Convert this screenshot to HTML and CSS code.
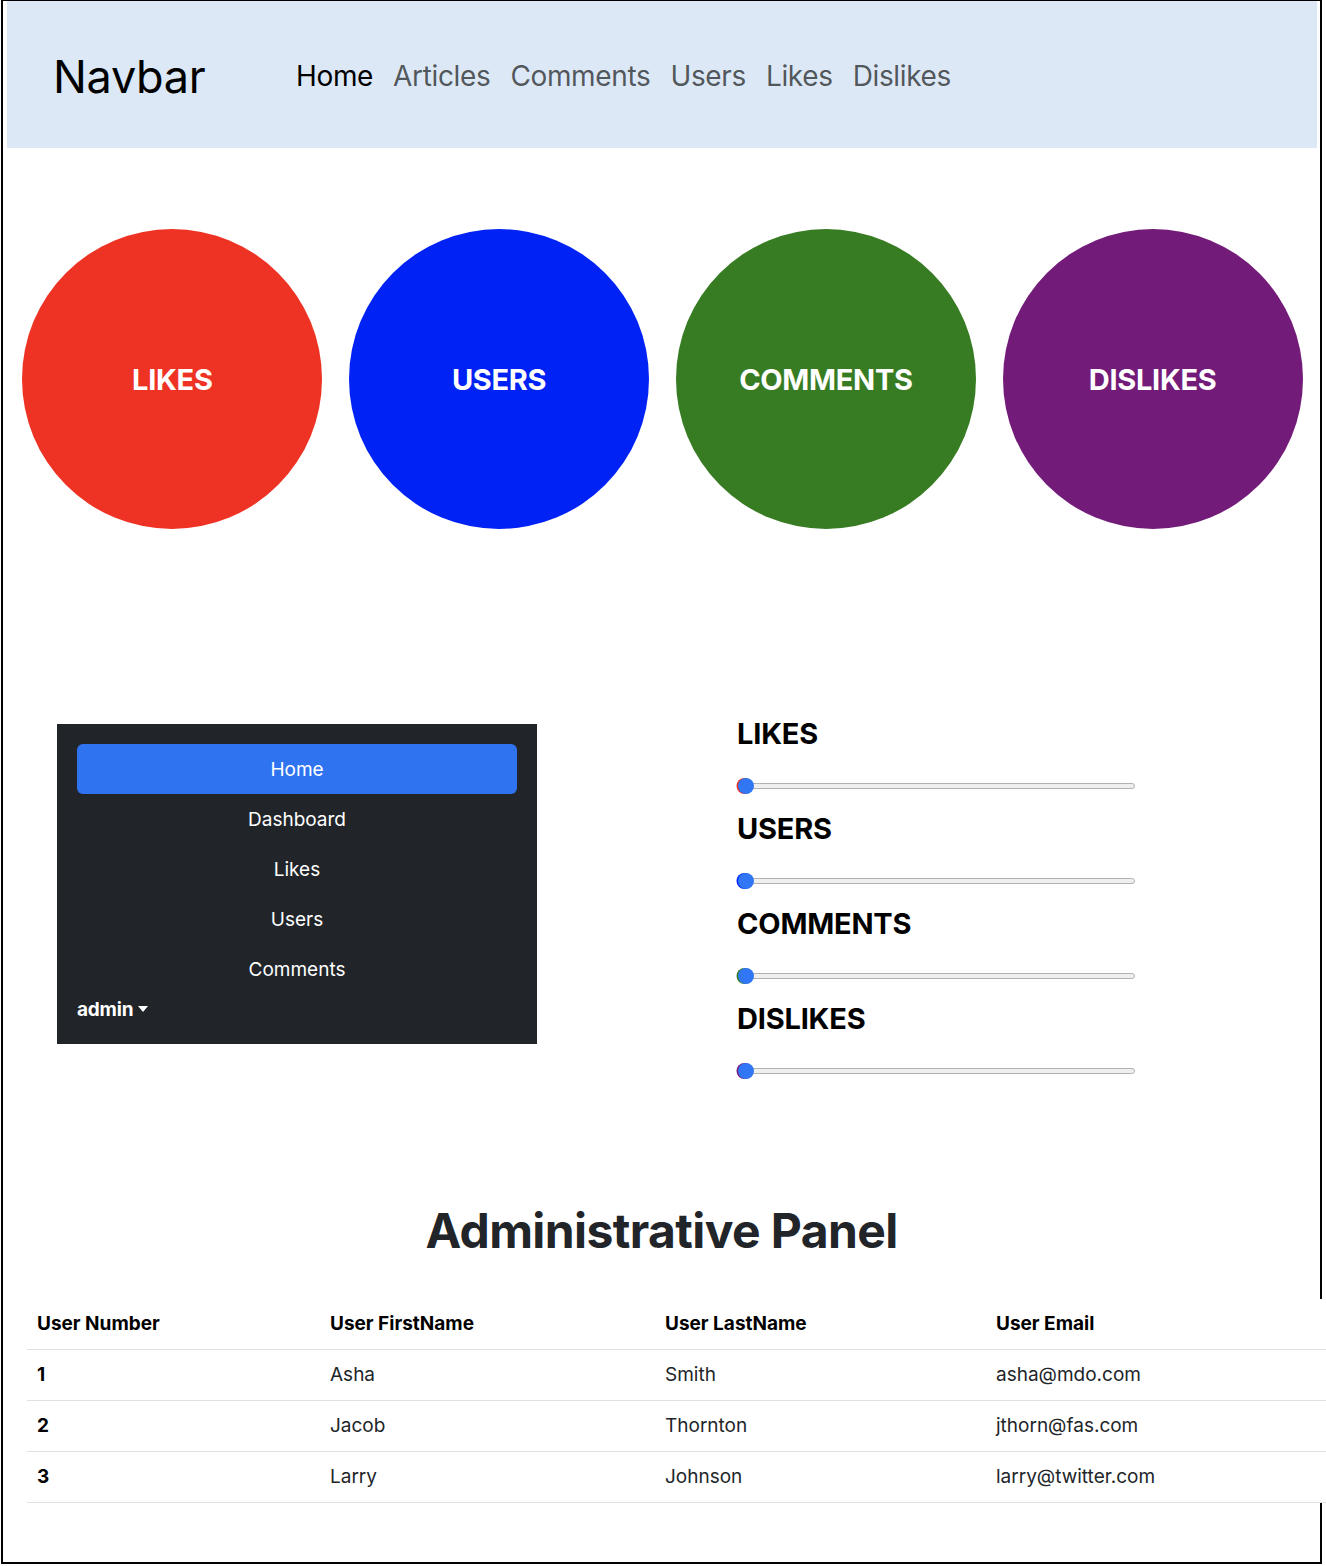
FILE: index.html
```html
<!DOCTYPE html>
<html lang="en">
<head>
<meta charset="utf-8">
<title>Navbar</title>
<link rel="stylesheet" href="styles.css">
</head>
<body>
<div class="frame">
  <nav class="navbar">
    <a class="brand" href="#">Navbar</a>
    <ul class="nav-links">
      <li><a class="active" href="#">Home</a></li>
      <li><a href="#">Articles</a></li>
      <li><a href="#">Comments</a></li>
      <li><a href="#">Users</a></li>
      <li><a href="#">Likes</a></li>
      <li><a href="#">Dislikes</a></li>
    </ul>
  </nav>

  <section class="circles">
    <div class="cell"><div class="circle red">LIKES</div></div>
    <div class="cell"><div class="circle blue">USERS</div></div>
    <div class="cell"><div class="circle green">COMMENTS</div></div>
    <div class="cell"><div class="circle purple">DISLIKES</div></div>
  </section>

  <section class="panel-row">
    <aside class="sidebar">
      <ul class="side-nav">
        <li><a class="active" href="#">Home</a></li>
        <li><a href="#">Dashboard</a></li>
        <li><a href="#">Likes</a></li>
        <li><a href="#">Users</a></li>
        <li><a href="#">Comments</a></li>
      </ul>
      <div class="admin">admin <span class="caret"></span></div>
    </aside>
    <div class="stats">
      <div class="stat">
        <h3>LIKES</h3>
        <input class="range c-red" type="range" value="0" min="0" max="100">
      </div>
      <div class="stat">
        <h3>USERS</h3>
        <input class="range c-blue" type="range" value="0" min="0" max="100">
      </div>
      <div class="stat">
        <h3>COMMENTS</h3>
        <input class="range c-green" type="range" value="0" min="0" max="100">
      </div>
      <div class="stat">
        <h3>DISLIKES</h3>
        <input class="range c-purple" type="range" value="0" min="0" max="100">
      </div>
    </div>
  </section>

  <h1 class="title">Administrative Panel</h1>

  <table class="users">
    <thead>
      <tr>
        <th class="w1">User Number</th>
        <th class="w2">User FirstName</th>
        <th class="w3">User LastName</th>
        <th class="w4">User Email</th>
      </tr>
    </thead>
    <tbody>
      <tr><th>1</th><td>Asha</td><td>Smith</td><td>asha@mdo.com</td></tr>
      <tr><th>2</th><td>Jacob</td><td>Thornton</td><td>jthorn@fas.com</td></tr>
      <tr><th>3</th><td>Larry</td><td>Johnson</td><td>larry@twitter.com</td></tr>
    </tbody>
  </table>
</div>
</body>
</html>
```
FILE: styles.css
```css
html {
  overflow-x: hidden;
}

body {
  margin: 0;
  font-family: Inter, "Noto Sans", "Liberation Sans", sans-serif;
  color: #212529;
  background: #fff;
}

.frame {
  box-sizing: border-box;
  width: 1321px;
  height: 1564px;
  margin-left: 1px;
  border: 2px solid #000;
  border-top-width: 1px;
}

/* navbar */
.navbar {
  display: flex;
  align-items: center;
  box-sizing: border-box;
  height: 147px;
  margin: 0 3px 0 4px;
  padding: 3px 0 0 46px;
  background: #dce8f5;
}

.brand {
  flex: 0 0 233px;
  font-size: 45px;
  color: #000;
  text-decoration: none;
  letter-spacing: -0.3px;
}

.nav-links {
  display: flex;
  list-style: none;
  margin: 0;
  padding: 0;
}

.nav-links a {
  display: block;
  padding: 0 10px;
  font-size: 28px;
  color: rgba(0, 0, 0, 0.65);
  text-decoration: none;
  letter-spacing: -0.35px;
}

.nav-links a.active {
  color: #000;
}

/* circles */
.circles {
  display: grid;
  grid-template-columns: repeat(4, 1fr);
  margin: 81px 4px 0 6px;
}

.cell {
  display: flex;
  justify-content: center;
}

.circle {
  display: flex;
  align-items: center;
  justify-content: center;
  width: 300px;
  height: 300px;
  border-radius: 50%;
  color: #fff;
  font-weight: 700;
  font-size: 29px;
  letter-spacing: -0.3px;
}

.red { background: #ee3324; }
.blue { background: #0022f5; }
.green { background: #377c22; }
.purple { background: #731b79; }

/* sidebar + stats */
.panel-row {
  display: flex;
  align-items: flex-start;
  margin-top: 187px;
  padding-left: 54px;
}

.sidebar {
  box-sizing: border-box;
  width: 480px;
  height: 320px;
  margin-top: 8px;
  padding: 20px;
  background: #212529;
}

.side-nav {
  list-style: none;
  margin: 0;
  padding: 0;
}

.side-nav a {
  display: block;
  height: 50px;
  line-height: 52px;
  text-align: center;
  font-size: 19px;
  color: #fff;
  text-decoration: none;
  border-radius: 6px;
}

.side-nav a.active {
  background: #2f73f1;
}

.admin {
  display: flex;
  align-items: center;
  height: 30px;
  font-size: 19px;
  font-weight: 700;
  color: #fff;
  letter-spacing: -0.2px;
}

.caret {
  display: inline-block;
  margin-left: 5px;
  border-top: 6px solid #fff;
  border-left: 5px solid transparent;
  border-right: 5px solid transparent;
}

.stats {
  margin-left: 200px;
}

.stat h3 {
  margin: 0 0 27px;
  font-size: 29px;
  line-height: 35px;
  font-weight: 700;
  color: #000;
  letter-spacing: -0.2px;
}

.range {
  display: block;
  -webkit-appearance: none;
  appearance: none;
  width: 398px;
  height: 16px;
  margin: 0 0 17px;
  padding: 0;
  background: transparent;
}

.range::-webkit-slider-runnable-track {
  height: 6px;
  background: #efefef;
  border: 1px solid #b2b2b2;
  border-radius: 4px;
}

.range::-webkit-slider-thumb {
  -webkit-appearance: none;
  appearance: none;
  width: 16px;
  height: 16px;
  margin-top: -6px;
  border-radius: 50%;
  background: #3176f5;
  border: none;
  box-shadow: -1.5px 0 0 0 var(--c);
}

.c-red { --c: #ee3324; }
.c-blue { --c: #0022f5; }
.c-green { --c: #377c22; }
.c-purple { --c: #731b79; }

/* title */
.title {
  margin: 106px 0 0;
  text-align: center;
  font-size: 48px;
  line-height: 58px;
  font-weight: 700;
  color: #212529;
  letter-spacing: -0.6px;
}

/* table */
.users {
  margin: 39px 0 0 24px;
  width: 1299px;
  border-collapse: collapse;
  background: #fff;
  table-layout: fixed;
  font-size: 19px;
}

.users th,
.users td {
  padding: 11px 10px;
  line-height: 28px;
  text-align: left;
  border-bottom: 1px solid #dee2e6;
  color: #000;
}

.users td {
  font-weight: 400;
  color: #212529;
}

.users th {
  font-weight: 700;
}

.w1 { width: 273px; }
.w2 { width: 315px; }
.w3 { width: 311px; }
.w4 { width: 320px; }
```
